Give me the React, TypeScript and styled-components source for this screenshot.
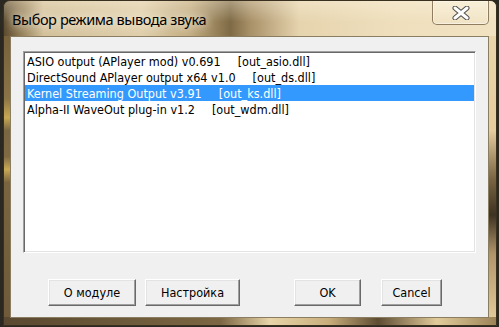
import { createGlobalStyle } from "styled-components";
import styled from "styled-components";

type Plugin = {
  name: string;
  file: string;
};

const PLUGINS: Plugin[] = [
  { name: "ASIO output (APlayer mod) v0.691", file: "[out_asio.dll]" },
  { name: "DirectSound APlayer output x64 v1.0", file: "[out_ds.dll]" },
  { name: "Kernel Streaming Output v3.91", file: "[out_ks.dll]" },
  { name: "Alpha-II WaveOut plug-in v1.2", file: "[out_wdm.dll]" },
];

const SELECTED = 2;

const GlobalStyle = createGlobalStyle`
  html, body {
    margin: 0;
    padding: 0;
    background: #2a2820;
    overflow: hidden;
  }
`;

export default function App() {
  return (
    <>
      <GlobalStyle />
      <Window>
        <TitleBar>
          <Title>Выбор режима вывода звука</Title>
          <CloseButton aria-label="Закрыть">
            <svg width="18" height="14" viewBox="0 0 18 14">
              <path
                d="M3 2 L15 12 M15 2 L3 12"
                stroke="#4e4e4e"
                strokeWidth="5"
                strokeLinecap="round"
                fill="none"
              />
              <path
                d="M3 2 L15 12 M15 2 L3 12"
                stroke="#ffffff"
                strokeWidth="3"
                strokeLinecap="round"
                fill="none"
              />
            </svg>
          </CloseButton>
        </TitleBar>

        <Client>
          <ListBox>
            {PLUGINS.map((plugin, i) => (
              <ListRow key={plugin.file} selected={i === SELECTED}>
                <span>{plugin.name}</span>
                <FileName>{plugin.file}</FileName>
              </ListRow>
            ))}
          </ListBox>

          <ButtonRow>
            <ButtonGroup>
              <Button width={88}>О модуле</Button>
              <Button width={95}>Настройка</Button>
            </ButtonGroup>
            <ButtonGroup gap={20}>
              <Button width={67}>OK</Button>
              <Button width={61}>Cancel</Button>
            </ButtonGroup>
          </ButtonRow>
        </Client>
      </Window>
    </>
  );
}

const Window = styled.div`
  box-sizing: border-box;
  margin-left: 3px;
  width: 494px;
  height: 326px;
  display: flex;
  flex-direction: column;
  padding: 0 7px 7px 6px;
  border: 1px solid #3a3020;
  border-radius: 7px 7px 0 0;
  background:
    linear-gradient(
        90deg,
        #5a4830 0%,
        #6d5a3a 25%,
        #7c6643 44%,
        #e8d4a8 54%,
        #c9ae7c 66%,
        #5e4c32 76%,
        #e2cb9b 88%,
        #9c8458 100%
      )
      left bottom / 100% 8px no-repeat,
    linear-gradient(
        180deg,
        #ecd9b0 0%,
        #e4cd9e 40%,
        #7a6442 55%,
        #3e3222 66%,
        #b0956a 78%,
        #e6cfa0 100%
      )
      right top / 8px 100% no-repeat,
    linear-gradient(
        180deg,
        #6c5836 0%,
        #8a7346 30%,
        #c7a752 36%,
        #7b6642 40%,
        #806a44 48%,
        #caa955 52%,
        #7a6440 56%,
        #6e5a39 100%
      )
      left top / 7px 100% no-repeat,
    #b39a6c;
`;

const TitleBar = styled.div`
  height: 35px;
  margin: 0 -7px 0 -6px;
  padding-left: 8px;
  display: flex;
  align-items: flex-start;
  justify-content: space-between;
  border-radius: 6px 6px 0 0;
  background:
    linear-gradient(180deg, rgba(255, 248, 230, 0.35) 0%, rgba(255, 248, 230, 0) 60%),
    linear-gradient(
      90deg,
      #5c4a2e 0%,
      #8c7650 3%,
      #d3c09a 8%,
      #e0cfab 28%,
      #c2ab80 38%,
      #7e6a45 46%,
      #a89068 50%,
      #e6d4ae 60%,
      #efdfbd 80%,
      #f1e2c2 100%
    );
`;

const Title = styled.div`
  margin-top: 7px;
  font-family: "Noto Sans", "Open Sans", sans-serif;
  font-size: 14.5px;
  letter-spacing: -0.4px;
  line-height: 22px;
  color: #000;
  text-shadow:
    0 0 8px rgba(255, 250, 235, 0.95),
    0 0 14px rgba(255, 250, 235, 0.8);
`;

const CloseButton = styled.div`
  box-sizing: border-box;
  width: 57px;
  height: 24px;
  margin-right: 7px;
  display: flex;
  align-items: center;
  justify-content: center;
  border: 1px solid rgba(110, 90, 60, 0.75);
  border-top: none;
  border-radius: 0 0 5px 5px;
  background: linear-gradient(180deg, rgba(255, 250, 235, 0.35), rgba(255, 250, 235, 0.1));
  box-shadow: inset 0 0 0 1px rgba(255, 255, 255, 0.45);
`;

const Client = styled.div`
  flex: 1;
  display: flex;
  flex-direction: column;
  padding: 14px 12px 11px 12px;
  background: #f0f0f0;
  border: 1px solid #8a7e62;
`;

const ListBox = styled.div`
  box-sizing: border-box;
  width: 453px;
  height: 202px;
  background: #fff;
  border: 1px solid;
  border-color: #a0a0a0 #ffffff #ffffff #a0a0a0;
  box-shadow:
    inset 1px 1px 0 #696969,
    inset -1px -1px 0 #e3e3e3;
  padding: 1px;
`;

const ListRow = styled.div<{ selected?: boolean }>`
  height: 16px;
  padding-left: 2px;
  display: flex;
  align-items: center;
  white-space: nowrap;
  font-family: "DejaVu Sans Condensed", "DejaVu Sans", sans-serif;
  font-stretch: condensed;
  font-size: 12.5px;
  color: ${(p) => (p.selected ? "#fff" : "#000")};
  background: ${(p) => (p.selected ? "#3399ff" : "transparent")};
`;

const FileName = styled.span`
  margin-left: 17px;
`;

const ButtonRow = styled.div`
  margin-top: 26px;
  padding: 0 34px 0 25px;
  display: flex;
  justify-content: space-between;
`;

const ButtonGroup = styled.div<{ gap?: number }>`
  display: flex;
  gap: ${(p) => p.gap ?? 9}px;
`;

const Button = styled.div<{ width: number }>`
  box-sizing: border-box;
  width: ${(p) => p.width}px;
  height: 27px;
  display: flex;
  align-items: center;
  justify-content: center;
  font-family: "DejaVu Sans Condensed", "DejaVu Sans", sans-serif;
  font-stretch: condensed;
  font-size: 12.5px;
  color: #000;
  background: #f0f0f0;
  border: 1px solid;
  border-color: #ffffff #696969 #696969 #ffffff;
  box-shadow:
    inset -1px -1px 0 #a0a0a0,
    inset 1px 1px 0 #e3e3e3;
`;
